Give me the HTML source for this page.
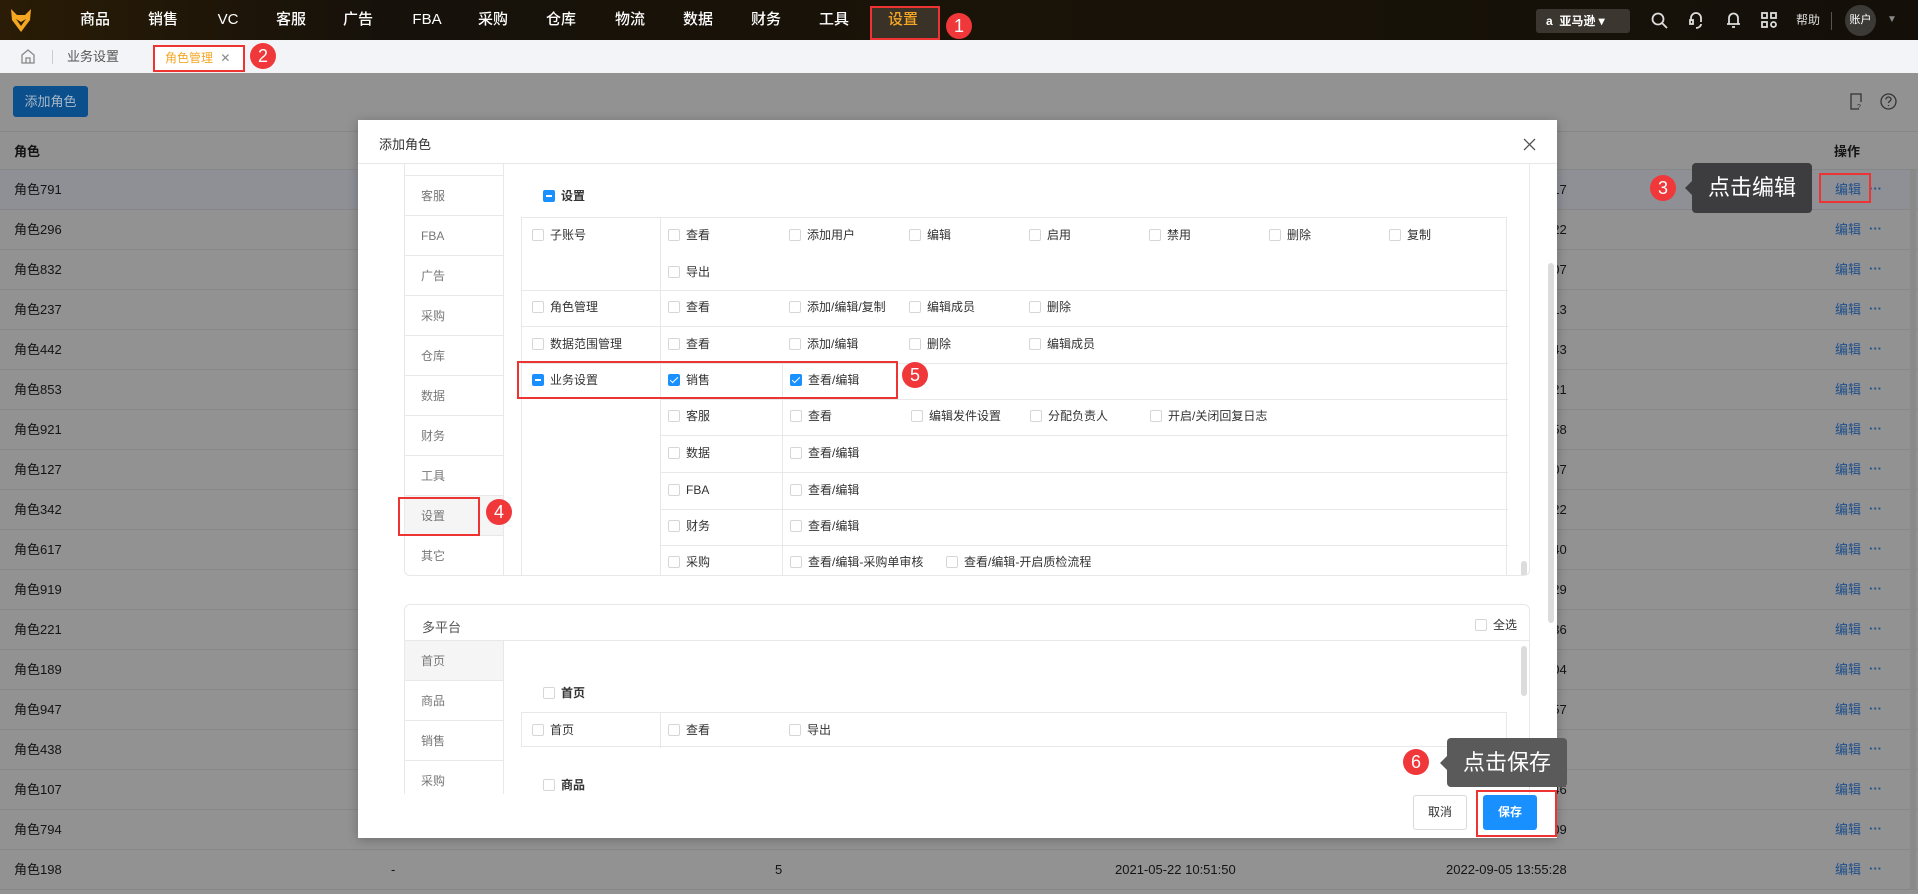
<!DOCTYPE html>
<html><head><meta charset="utf-8"><style>
*{box-sizing:border-box;margin:0;padding:0}
body{width:1918px;height:894px;overflow:hidden;position:relative;background:#929292;font-family:"Liberation Sans","Noto Sans CJK SC",sans-serif;font-size:13px;color:#141414}
.a{position:absolute}
.nav{left:0;top:0;width:1918px;height:40px;background:linear-gradient(90deg,#2a1c06 0%,#16110a 20%,#1a1308 50%,#141009 100%)}
.nav .it{position:absolute;top:0;line-height:40px;height:40px;color:#fff;font-size:15px;transform:translateX(-50%);font-weight:500}
.badge{position:absolute;width:26px;height:26px;border-radius:50%;background:#f0373a;color:#fff;font-size:18px;text-align:center;line-height:26px;transform:translate(-50%,-50%)}
.red{position:absolute;border:2px solid #ee3333}
.tabs{left:0;top:40px;width:1918px;height:33px;background:#f3f4f8}
.row{position:absolute;left:0;width:1918px;height:40px;border-bottom:1px solid #878787}
.row span{position:absolute;top:0;line-height:40px}
.modal{left:358px;top:120px;width:1199px;height:718px;background:#fff;box-shadow:0 2px 10px rgba(0,0,0,.25)}
.cb{display:inline-block;width:12px;height:12px;border:1px solid #d6d6d6;border-radius:2px;background:#fff;vertical-align:-2px;margin-right:6px}
.cbm{background:#1890ff;border-color:#1890ff;position:relative}
.cbm:after{content:"";position:absolute;left:2px;top:4px;width:6px;height:2px;background:#fff}
.cbc{background:#1890ff;border-color:#1890ff;position:relative}
.cbc:after{content:"";position:absolute;left:3px;top:0px;width:3px;height:7px;border:solid #fff;border-width:0 1.5px 1.5px 0;transform:rotate(45deg)}
.m{position:absolute;font-size:12px;color:#333;white-space:nowrap;line-height:16px}
.ln{position:absolute;background:#e8e8e8}
.nv{position:absolute;left:0;width:98px;height:40px;border-bottom:1px solid #e8e8e8;color:#777;font-size:12px;padding-left:16px;line-height:40px}
.tip{position:absolute;color:#fff;font-size:22px;text-align:center;border-radius:4px}
.tip:before{content:"";position:absolute;left:-7px;top:50%;margin-top:-7px;border:7px solid transparent;border-left:0;border-right-color:inherit}
</style></head><body>
<div class="a nav">
 <svg class="a" style="left:10px;top:8px" width="22" height="25" viewBox="0 0 22 25"><path d="M1 1 L7 7 L15 7 L21 1 L20 12 L11 24 L2 12 Z" fill="#f5a623"/><path d="M6 11 L11 18 L16 11 L11 14 Z" fill="#2a1c06"/></svg>
 <div class="it" style="left:95px">商品</div><div class="it" style="left:163px">销售</div><div class="it" style="left:228px">VC</div><div class="it" style="left:291px">客服</div><div class="it" style="left:358px">广告</div><div class="it" style="left:427px">FBA</div><div class="it" style="left:493px">采购</div><div class="it" style="left:561px">仓库</div><div class="it" style="left:630px">物流</div><div class="it" style="left:698px">数据</div><div class="it" style="left:766px">财务</div><div class="it" style="left:834px">工具</div>
 <div class="a" style="left:871px;top:6px;width:68px;height:33px;background:#3a3226"></div>
 <div class="it" style="left:903px;color:#f5a623">设置</div>
 <div class="a" style="left:1536px;top:9px;width:94px;height:24px;background:#3b362f;border-radius:3px;color:#fff;font-size:12px;padding-left:10px;line-height:24px;font-weight:bold">a&nbsp; 亚马逊 ▾</div>
 <svg class="a" style="left:1651px;top:12px" width="17" height="17" viewBox="0 0 17 17" fill="none" stroke="#ddd" stroke-width="1.8"><circle cx="7" cy="7" r="5.5"/><path d="M11 11l5 5"/></svg>
 <svg class="a" style="left:1688px;top:11px" width="16" height="19" viewBox="0 0 16 19" fill="none" stroke="#ddd" stroke-width="1.8"><path d="M3 10V7a5 5 0 0110 0v4M8 17c3 0 5-2 5-4"/><rect x="2" y="9" width="3" height="4"/></svg>
 <svg class="a" style="left:1726px;top:11px" width="15" height="18" viewBox="0 0 15 18" fill="none" stroke="#ddd" stroke-width="1.8"><path d="M3 13V7a4.5 4.5 0 019 0v6M1 13h13M6 16h3"/></svg>
 <svg class="a" style="left:1761px;top:12px" width="16" height="16" viewBox="0 0 16 16" fill="none" stroke="#ddd" stroke-width="1.8"><rect x="1" y="1" width="5" height="5"/><rect x="10" y="1" width="5" height="5"/><rect x="1" y="10" width="5" height="5"/><circle cx="12.5" cy="12.5" r="2.5"/></svg>
 <div class="a" style="left:1796px;top:0;line-height:40px;color:#ddd;font-size:12px">帮助</div>
 <div class="a" style="left:1831px;top:12px;width:1px;height:18px;background:#555"></div>
 <div class="a" style="left:1845px;top:5px;width:31px;height:31px;border-radius:50%;background:#3c3a36;color:#fff;font-size:11px;text-align:center;line-height:31px">账户</div>
 <div class="a" style="left:1887px;top:0;line-height:40px;color:#888;font-size:10px">▼</div>
</div>
<div class="red" style="left:870px;top:6px;width:70px;height:34px"></div>
<div class="badge" style="left:959px;top:26px">1</div>

<div class="a tabs">
 <svg class="a" style="left:21px;top:9px" width="14" height="15" viewBox="0 0 14 15" fill="none" stroke="#888" stroke-width="1.3"><path d="M1 6L7 1l6 5v8H1z M5 14V9h4v5"/></svg>
 <div class="a" style="left:52px;top:10px;width:1px;height:14px;background:#ccc"></div>
 <div class="a" style="left:67px;top:0;line-height:33px;color:#555;font-size:13px">业务设置</div>
 <div class="a" style="left:154px;top:6px;width:89px;height:25px;background:#fff"></div>
 <div class="a" style="left:165px;top:6px;line-height:25px;color:#f5a623;font-size:12px">角色管理 <span style="color:#888;margin-left:4px">✕</span></div>
</div>
<div class="red" style="left:153px;top:45px;width:92px;height:27px"></div>
<div class="badge" style="left:263px;top:56px">2</div>

<div class="a" style="left:13px;top:86px;width:75px;height:31px;background:#0b4f8c;border-radius:3px;color:#a8b8c8;font-size:13px;text-align:center;line-height:31px">添加角色</div>
<svg class="a" style="left:1849px;top:93px" width="14" height="17" viewBox="0 0 14 17" fill="none" stroke="#333" stroke-width="1.3"><path d="M10 16H2V1h10v8"/><text x="8" y="16" font-size="7" fill="#333" stroke="none">?</text></svg>
<svg class="a" style="left:1880px;top:93px" width="17" height="17" viewBox="0 0 17 17" fill="none" stroke="#333" stroke-width="1.3"><circle cx="8.5" cy="8.5" r="7.5"/><path d="M6 6.5a2.5 2.5 0 115 0c0 1.5-2.5 1.8-2.5 3.5M8.5 12v1"/></svg>

<div class="row" style="top:131px;height:39px;border-top:1px solid #878787"><span style="left:14px;font-weight:bold">角色</span><span style="left:1834px;font-weight:bold">操作</span></div>
<div id="rows"></div>
<script>
var n=[791,296,832,237,442,853,921,127,342,617,919,221,189,947,438,107,794,198];
var t=["4:17","9:22","8:07","8:13","4:43","8:21","5:58","8:07","8:22","1:40","0:29","5:36","4:04","2:57","2:23","3:46","5:09","5:28"];
var h="";
for(var i=0;i<n.length;i++){
 var y=170+i*40;
 h+='<div class="row" style="top:'+y+'px;'+(i==0?'background:#8e9096;':'')+'"><span style="left:14px">角色'+n[i]+'</span>'+(i==17?'<span style="left:391px">-</span><span style="left:775px">5</span><span style="left:1115px">2021-05-22 10:51:50</span>':'')+'<span style="left:1446px">2022-09-05 13:5'+t[i]+'</span><span style="left:1835px;color:#1f4f8a">编辑</span><span style="left:1869px;color:#1f4f8a;font-weight:bold;line-height:38px">···</span></div>';
}
document.getElementById("rows").innerHTML=h;
</script>
<div class="a" style="left:1910px;top:170px;width:6px;height:720px;background:#8a8a8a"></div>

<div class="a modal">
 <div class="a" style="left:21px;top:14px;font-size:13px;color:#333">添加角色</div>
 <svg class="a" style="left:1165px;top:18px" width="13" height="13" viewBox="0 0 13 13" stroke="#555" stroke-width="1.3"><path d="M1 1l11 11M12 1L1 12"/></svg>
 <div class="ln" style="left:0;top:43px;width:1199px;height:1px"></div>
 <div class="a" style="left:46px;top:44px;width:1126px;height:412px;border:1px solid #e8e8e8;border-top:0;border-radius:0 0 6px 6px;overflow:hidden">
  <div class="a" style="left:0;top:0;width:99px;height:412px;border-right:1px solid #e8e8e8">
   <div class="nv" style="top:-28px">&nbsp;</div>
   <div class="nv" style="top:12px">客服</div><div class="nv" style="top:52px">FBA</div><div class="nv" style="top:92px">广告</div><div class="nv" style="top:132px">采购</div><div class="nv" style="top:172px">仓库</div><div class="nv" style="top:212px">数据</div><div class="nv" style="top:252px">财务</div><div class="nv" style="top:292px">工具</div><div class="nv" style="top:332px;background:#f5f5f5">设置</div><div class="nv" style="top:372px">其它</div>
  </div>
  <div class="m" style="left:138px;top:24px;font-weight:bold"><i class="cb cbm"></i>设置</div>
  <div class="a" style="left:116px;top:53px;width:986px;height:360px;border:1px solid #e8e8e8">
   <div class="ln" style="left:0;top:72px;width:986px;height:1px"></div>
   <div class="ln" style="left:0;top:108px;width:986px;height:1px"></div>
   <div class="ln" style="left:0;top:145px;width:986px;height:1px"></div>
   <div class="ln" style="left:138px;top:181px;width:848px;height:1px"></div>
   <div class="ln" style="left:138px;top:217px;width:848px;height:1px"></div>
   <div class="ln" style="left:138px;top:254px;width:848px;height:1px"></div>
   <div class="ln" style="left:138px;top:291px;width:848px;height:1px"></div>
   <div class="ln" style="left:138px;top:327px;width:848px;height:1px"></div>
   <div class="ln" style="left:138px;top:0;width:1px;height:360px"></div>
   <div class="ln" style="left:260px;top:145px;width:1px;height:215px"></div>
  </div>
  <div class="m" style="left:127px;top:63px"><i class="cb"></i>子账号</div>
  <div class="m" style="left:263px;top:63px"><i class="cb"></i>查看</div><div class="m" style="left:384px;top:63px"><i class="cb"></i>添加用户</div><div class="m" style="left:504px;top:63px"><i class="cb"></i>编辑</div><div class="m" style="left:624px;top:63px"><i class="cb"></i>启用</div><div class="m" style="left:744px;top:63px"><i class="cb"></i>禁用</div><div class="m" style="left:864px;top:63px"><i class="cb"></i>删除</div><div class="m" style="left:984px;top:63px"><i class="cb"></i>复制</div>
  <div class="m" style="left:263px;top:100px"><i class="cb"></i>导出</div>
  <div class="m" style="left:127px;top:135px"><i class="cb"></i>角色管理</div>
  <div class="m" style="left:263px;top:135px"><i class="cb"></i>查看</div><div class="m" style="left:384px;top:135px"><i class="cb"></i>添加/编辑/复制</div><div class="m" style="left:504px;top:135px"><i class="cb"></i>编辑成员</div><div class="m" style="left:624px;top:135px"><i class="cb"></i>删除</div>
  <div class="m" style="left:127px;top:172px"><i class="cb"></i>数据范围管理</div>
  <div class="m" style="left:263px;top:172px"><i class="cb"></i>查看</div><div class="m" style="left:384px;top:172px"><i class="cb"></i>添加/编辑</div><div class="m" style="left:504px;top:172px"><i class="cb"></i>删除</div><div class="m" style="left:624px;top:172px"><i class="cb"></i>编辑成员</div>
  <div class="m" style="left:127px;top:208px"><i class="cb cbm"></i>业务设置</div>
  <div class="m" style="left:263px;top:208px"><i class="cb cbc"></i>销售</div><div class="m" style="left:385px;top:208px"><i class="cb cbc"></i>查看/编辑</div>
  <div class="m" style="left:263px;top:244px"><i class="cb"></i>客服</div><div class="m" style="left:385px;top:244px"><i class="cb"></i>查看</div><div class="m" style="left:506px;top:244px"><i class="cb"></i>编辑发件设置</div><div class="m" style="left:625px;top:244px"><i class="cb"></i>分配负责人</div><div class="m" style="left:745px;top:244px"><i class="cb"></i>开启/关闭回复日志</div>
  <div class="m" style="left:263px;top:281px"><i class="cb"></i>数据</div><div class="m" style="left:385px;top:281px"><i class="cb"></i>查看/编辑</div>
  <div class="m" style="left:263px;top:318px"><i class="cb"></i>FBA</div><div class="m" style="left:385px;top:318px"><i class="cb"></i>查看/编辑</div>
  <div class="m" style="left:263px;top:354px"><i class="cb"></i>财务</div><div class="m" style="left:385px;top:354px"><i class="cb"></i>查看/编辑</div>
  <div class="m" style="left:263px;top:390px"><i class="cb"></i>采购</div><div class="m" style="left:385px;top:390px"><i class="cb"></i>查看/编辑-采购单审核</div><div class="m" style="left:541px;top:390px"><i class="cb"></i>查看/编辑-开启质检流程</div>
  <div class="a" style="left:1116px;top:397px;width:6px;height:16px;border-radius:3px;background:#dcdcdc"></div>
 </div>
 <div class="a" style="left:46px;top:484px;width:1126px;height:190px;border:1px solid #e8e8e8;border-bottom:0;border-radius:6px 6px 0 0;overflow:hidden">
  <div class="a" style="left:17px;top:12px;font-size:13px;color:#555">多平台</div>
  <div class="m" style="left:1070px;top:12px"><i class="cb"></i>全选</div>
  <div class="ln" style="left:0;top:35px;width:1126px;height:1px"></div>
  <div class="a" style="left:0;top:36px;width:99px;height:160px;border-right:1px solid #e8e8e8">
   <div class="nv" style="top:0;background:#f5f5f5">首页</div><div class="nv" style="top:40px">商品</div><div class="nv" style="top:80px">销售</div><div class="nv" style="top:120px">采购</div>
  </div>
  <div class="m" style="left:138px;top:80px;font-weight:bold"><i class="cb"></i>首页</div>
  <div class="a" style="left:116px;top:107px;width:986px;height:35px;border:1px solid #e8e8e8"><div class="ln" style="left:138px;top:0;width:1px;height:35px"></div></div>
  <div class="m" style="left:127px;top:117px"><i class="cb"></i>首页</div><div class="m" style="left:263px;top:117px"><i class="cb"></i>查看</div><div class="m" style="left:384px;top:117px"><i class="cb"></i>导出</div>
  <div class="m" style="left:138px;top:172px;font-weight:bold"><i class="cb"></i>商品</div>
  <div class="a" style="left:1116px;top:41px;width:6px;height:50px;border-radius:3px;background:#dcdcdc"></div>
 </div>
 <div class="a" style="left:1190px;top:143px;width:6px;height:360px;border-radius:3px;background:#dcdcdc"></div>
 <div class="a" style="left:1055px;top:675px;width:54px;height:35px;border:1px solid #d9d9d9;border-radius:3px;text-align:center;line-height:33px;font-size:12px;color:#333">取消</div>
 <div class="a" style="left:1125px;top:675px;width:54px;height:35px;background:#1890ff;border-radius:3px;text-align:center;line-height:35px;font-size:12px;color:#fff;font-weight:bold">保存</div>
</div>

<div class="red" style="left:517px;top:361px;width:381px;height:38px"></div>
<div class="badge" style="left:915px;top:375px">5</div>
<div class="red" style="left:398px;top:497px;width:82px;height:39px"></div>
<div class="badge" style="left:499px;top:512px">4</div>
<div class="red" style="left:1476px;top:790px;width:81px;height:47px"></div>
<div class="tip" style="left:1447px;top:738px;width:120px;height:49px;line-height:49px;background:#5a5a5a;border-color:#5a5a5a">点击保存</div>
<div class="badge" style="left:1416px;top:762px">6</div>
<div class="red" style="left:1819px;top:173px;width:52px;height:30px"></div>
<div class="tip" style="left:1692px;top:163px;width:120px;height:50px;line-height:50px;background:#3d3d40;border-color:#3d3d40">点击编辑</div>
<div class="badge" style="left:1663px;top:188px">3</div>
</body></html>
